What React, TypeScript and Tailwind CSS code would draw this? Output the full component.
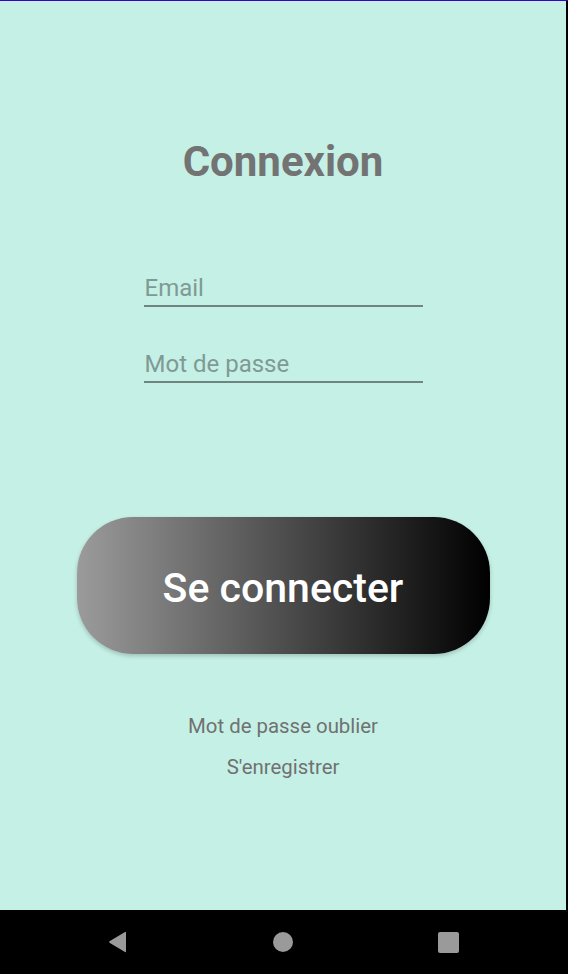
import React from 'react'

const font = { fontFamily: 'Roboto, "Noto Sans", sans-serif' }

const Field = ({ placeholder, type, className }: { placeholder: string; type: string; className?: string }) => (
  <div className={`w-[279px] border-b-2 border-[#6f8580] ${className ?? ''}`}>
    <input
      type={type}
      placeholder={placeholder}
      className="block w-full h-[28px] mb-[3px] bg-transparent pl-[1px] text-[24px] leading-[28px] text-[#333] placeholder:text-[#7f9a94] outline-none"
    />
  </div>
)

export default function App() {
  return (
    <div className="w-[568px] h-[974px] flex flex-col bg-black" style={font}>
      {/* status strip */}
      <div className="h-[1px] bg-[#3c00c8]" />

      {/* screen */}
      <div className="flex-1 flex flex-col items-center bg-[#c5f0e6] mr-[2px]">
        <h1 className="mt-[136px] text-[42px] leading-[50px] font-bold text-[#737373]">Connexion</h1>

        <Field placeholder="Email" type="email" className="mt-[87px]" />
        <Field placeholder="Mot de passe" type="password" className="mt-[43px]" />

        <button
          type="button"
          className="mt-[134px] w-[413px] h-[137px] pt-[6px] rounded-[56px] bg-[linear-gradient(to_right,#9b9b9b,#000)] text-white text-[41px] font-medium shadow-[0_2px_4px_rgba(0,0,0,0.2)] flex items-center justify-center"
        >
          Se connecter
        </button>

        <a className="mt-[60px] text-[20.4px] leading-[24px] text-[#717171]">Mot de passe oublier</a>
        <a className="mt-[17px] text-[20.4px] leading-[24px] text-[#717171]">S'enregistrer</a>
      </div>

      {/* navigation bar */}
      <div className="h-[64px] bg-black flex items-center justify-center gap-[125px] pr-[2px]">
        <div className="w-[40px] flex justify-center">
          <svg width="20" height="22" viewBox="0 0 20 22">
            <path d="M18 1.5 L18 20.5 Q18 21.5 17 21 L1.5 11.8 Q0.8 11 1.5 10.2 L17 1 Q18 0.5 18 1.5 Z" fill="#9a9a9a" />
          </svg>
        </div>
        <div className="w-[40px] flex justify-center">
          <div className="w-[20px] h-[20px] rounded-full bg-[#9a9a9a]" />
        </div>
        <div className="w-[40px] flex justify-center">
          <div className="w-[21px] h-[21px] rounded-[2px] bg-[#9a9a9a]" />
        </div>
      </div>
    </div>
  )
}
